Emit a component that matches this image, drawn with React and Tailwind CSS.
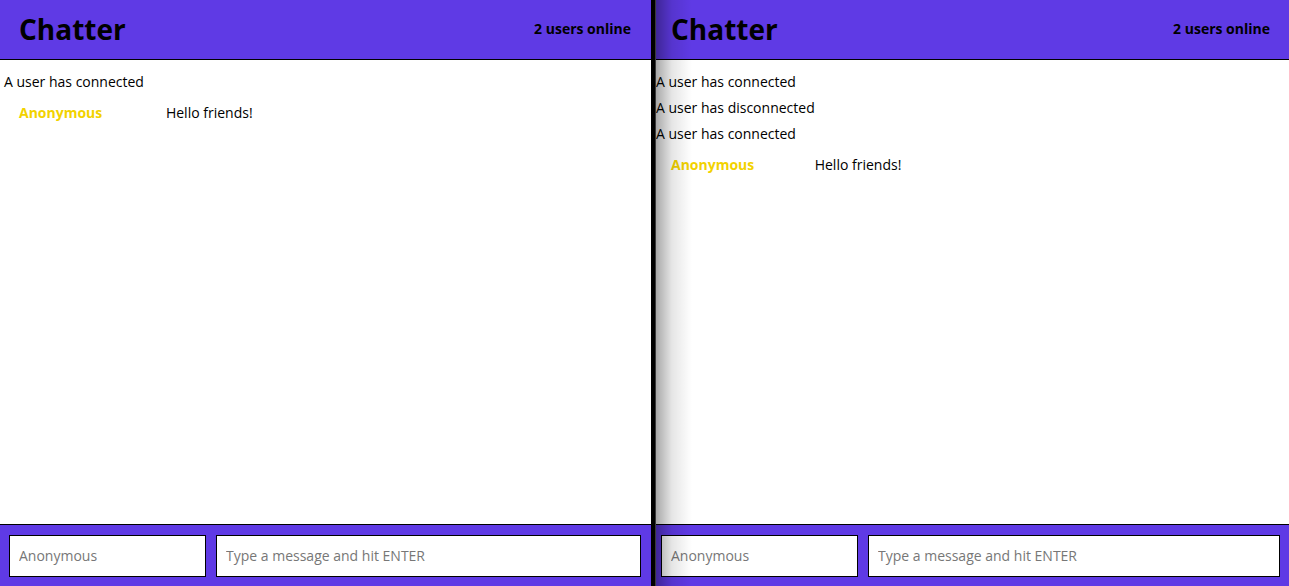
import React from 'react';

const font = { fontFamily: '"Open Sans", "Noto Sans", sans-serif' };

function ChatPane({ notices, messages, shaded }) {
  return (
    <div className={`relative flex flex-col h-full bg-white ${shaded ? 'flex-1' : 'w-[651px]'}`}>
      {/* Header */}
      <header className={`h-[60px] shrink-0 bg-[#5f3ae5] border-b border-black flex items-center justify-between pl-[19px] pb-[2px] ${shaded ? 'pr-[19px]' : 'pr-[20px]'}`}>
        <h1 className="text-[28px] font-bold text-black leading-none">Chatter</h1>
        <span className="text-[14px] font-bold text-black">2 users online</span>
      </header>

      {/* Messages */}
      <div className="flex-1 overflow-hidden px-1 pt-[9px] text-[14px] text-black">
        {notices.map((n, i) => (
          <div key={i} className="leading-[26px]">{n}</div>
        ))}
        {messages.map((m, i) => (
          <div key={i} className="flex py-[5px] pl-[15px] leading-[26px]">
            <span className="w-[23.4%] shrink-0 font-bold text-[#f2d200]">{m.name}</span>
            <span>{m.text}</span>
          </div>
        ))}
      </div>

      {/* Footer */}
      <footer className={`h-[62px] shrink-0 bg-[#5f3ae5] border-t border-black flex items-start gap-[10px] pl-[9px] pt-[10px] ${shaded ? 'pr-[9px]' : 'pr-[10px]'}`}>
        <input
          placeholder="Anonymous"
          className="w-[197px] h-[42px] shrink-0 bg-white border border-black px-[9px] pb-[2px] text-[14px] text-black placeholder:text-[#777] outline-none"
          style={font}
        />
        <input
          placeholder="Type a message and hit ENTER"
          className="flex-1 min-w-0 h-[42px] bg-white border border-black px-[9px] pb-[2px] text-[14px] text-black placeholder:text-[#777] outline-none"
          style={font}
        />
      </footer>

      {shaded && (
        <>
          <div className="absolute inset-y-0 left-0 w-[40px] bg-gradient-to-r from-black/40 via-black/10 to-transparent pointer-events-none" />
          <div className="absolute inset-y-0 -left-[1px] w-[4px] bg-black pointer-events-none" />
          <div className="absolute inset-y-0 left-[3px] w-[1px] bg-[#3a3a3a] pointer-events-none" />
        </>
      )}
    </div>
  );
}

export default function App() {
  return (
    <div className="flex w-[1289px] h-[586px] overflow-hidden bg-black" style={font}>
      <ChatPane
        notices={['A user has connected']}
        messages={[{ name: 'Anonymous', text: 'Hello friends!' }]}
      />
      <div className="w-[1px] shrink-0 bg-black" />
      <ChatPane
        shaded
        notices={['A user has connected', 'A user has disconnected', 'A user has connected']}
        messages={[{ name: 'Anonymous', text: 'Hello friends!' }]}
      />
    </div>
  );
}
